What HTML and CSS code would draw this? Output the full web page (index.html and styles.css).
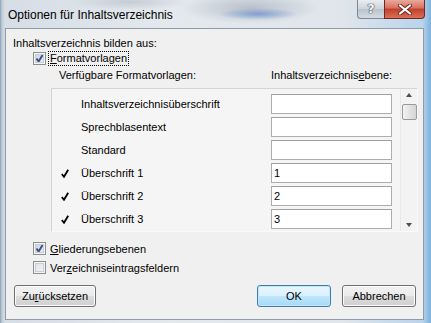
FILE: index.html
```html
<!DOCTYPE html>
<html lang="de">
<head>
  <meta charset="UTF-8">
  <title>Optionen für Inhaltsverzeichnis</title>
  <link rel="stylesheet" href="styles.css">
</head>
<body>
<div class="window">
  <div class="titlebar">
    <span class="title">Optionen für Inhaltsverzeichnis</span>
    <div class="caption-buttons">
      <span class="btn-help">?</span>
      <span class="btn-close">
        <svg width="14" height="11" viewBox="0 0 14 11">
          <path d="M2 1.5 L12 9.5 M12 1.5 L2 9.5" stroke="#6b2a22" stroke-width="4" stroke-linecap="round"/>
          <path d="M2 1.5 L12 9.5 M12 1.5 L2 9.5" stroke="#ffffff" stroke-width="2.2" stroke-linecap="round"/>
        </svg>
      </span>
    </div>
  </div>

  <div class="client">
    <div class="line">Inhaltsverzeichnis bilden aus:</div>

    <div class="check-row">
      <span class="checkbox checked"></span>
      <span class="focus"><u>F</u>ormatvorlagen</span>
    </div>

    <div class="col-heads">
      <span class="head-left">Verfügbare Formatvorlagen:</span>
      <span>Inhaltsverzeichnis<u>e</u>bene:</span>
    </div>

    <div class="listbox">
      <div class="rows">
        <div class="row">
          <span class="mark"></span>
          <span class="name">Inhaltsverzeichnisüberschrift</span>
          <span class="level"></span>
        </div>
        <div class="row">
          <span class="mark"></span>
          <span class="name">Sprechblasentext</span>
          <span class="level"></span>
        </div>
        <div class="row">
          <span class="mark"></span>
          <span class="name">Standard</span>
          <span class="level"></span>
        </div>
        <div class="row">
          <span class="mark">
            <svg width="8" height="9" viewBox="0 0 8 9"><path d="M0.8 5 L3 7.8 L7.2 0.8" stroke="#000" stroke-width="1.8" fill="none"/></svg>
          </span>
          <span class="name">Überschrift 1</span>
          <span class="level">1</span>
        </div>
        <div class="row">
          <span class="mark">
            <svg width="8" height="9" viewBox="0 0 8 9"><path d="M0.8 5 L3 7.8 L7.2 0.8" stroke="#000" stroke-width="1.8" fill="none"/></svg>
          </span>
          <span class="name">Überschrift 2</span>
          <span class="level">2</span>
        </div>
        <div class="row">
          <span class="mark">
            <svg width="8" height="9" viewBox="0 0 8 9"><path d="M0.8 5 L3 7.8 L7.2 0.8" stroke="#000" stroke-width="1.8" fill="none"/></svg>
          </span>
          <span class="name">Überschrift 3</span>
          <span class="level">3</span>
        </div>
      </div>
      <div class="scrollbar">
        <span class="arrow-up"></span>
        <span class="thumb"></span>
        <span class="track"></span>
        <span class="arrow-down"></span>
      </div>
    </div>

    <div class="check-row lower">
      <span class="checkbox checked"></span>
      <span class="plain"><u>G</u>liederungsebenen</span>
    </div>
    <div class="check-row lower second">
      <span class="checkbox"></span>
      <span class="plain">Ver<u>z</u>eichniseintragsfeldern</span>
    </div>

    <div class="buttons">
      <span class="button">Zu<u>r</u>ücksetzen</span>
      <span class="spacer"></span>
      <span class="button default">OK</span>
      <span class="button">Abbrechen</span>
    </div>
  </div>
</div>
</body>
</html>
```

FILE: styles.css
```css
* {
  margin: 0;
  padding: 0;
  box-sizing: border-box;
}

body {
  font-family: "Liberation Sans", Arial, sans-serif;
  font-size: 11px;
  color: #000;
  background: #c9d3dd;
}

/* Glass frame */
.window {
  width: 431px;
  height: 323px;
  display: flex;
  flex-direction: column;
  background:
    radial-gradient(ellipse 40px 6px at 258px 14px, rgba(70, 120, 200, 0.55), transparent),
    radial-gradient(ellipse 70px 16px at 250px 8px, rgba(150, 160, 175, 0.55), transparent),
    radial-gradient(ellipse 60px 8px at 130px 2px, rgba(170, 178, 190, 0.5), transparent),
    linear-gradient(to right, #8aa0b6 0, #c2ccd6 2px, #d6dde5 5px, #e4e9ee 40%, #dfe5eb 80%, #b8d4ec 98%, #7fb2dc 100%);
}

.titlebar {
  height: 28px;
  display: flex;
  justify-content: space-between;
  align-items: flex-start;
  padding: 0 6px 0 8px;
}

.title {
  font-size: 12px;
  line-height: 15px;
  margin-top: 8px;
}

.caption-buttons {
  display: flex;
}

.btn-help {
  width: 27px;
  height: 19px;
  border: 1px solid #7d8894;
  border-top: none;
  border-right: none;
  border-radius: 0 0 0 4px;
  background: linear-gradient(#e9edf1, #cbd3db 50%, #b9c3cd 51%, #d3dbe3);
  text-align: center;
  font-family: "DejaVu Sans", sans-serif;
  font-size: 13px;
  font-weight: bold;
  line-height: 17px;
  color: #f4f6f8;
  text-shadow: 0 0 1px #3a4048, 0 0 1px #3a4048, 0 0 1px #3a4048;
}

.btn-close {
  width: 41px;
  height: 19px;
  border: 1px solid #6e2a20;
  border-top: none;
  border-radius: 0 0 4px 0;
  background: linear-gradient(#e9a99c, #d6705f 45%, #c43e2a 50%, #d9705a);
  display: flex;
  align-items: center;
  justify-content: center;
}

/* Dialog body */
.client {
  flex: 1;
  margin: 0 7px 3px 5px;
  border: 1px solid #8f9ba6;
  background: #f0f0f0;
  padding: 7px 7px 0 7px;
  display: flex;
  flex-direction: column;
}

.line {
  line-height: 15px;
}

.check-row {
  display: flex;
  align-items: center;
  height: 15px;
  padding-left: 20px;
}

.check-row.lower {
  margin-top: 9px;
}

.check-row.second {
  margin-top: 4px;
}

.checkbox {
  width: 13px;
  height: 13px;
  border: 1px solid #8e8f8f;
  background: linear-gradient(135deg, #dcdfe3, #f6f6f6);
  box-shadow: inset 0 0 0 1px #f4f4f4, inset 0 0 0 2px #c9ced4;
  margin-right: 2px;
}

.checkbox.checked {
  background:
    url("data:image/svg+xml,%3Csvg xmlns='http://www.w3.org/2000/svg' width='11' height='11'%3E%3Cpath d='M2.5 5.5 L4.6 8.6 L8.6 2' stroke='%23344f8a' stroke-width='1.9' fill='none'/%3E%3C/svg%3E") center no-repeat,
    linear-gradient(135deg, #c9d0dc, #eef0f4);
}

.focus {
  border: 1px dotted #000;
  padding: 0 1px;
  line-height: 13px;
}

.plain {
  padding-left: 2px;
}

.col-heads {
  display: flex;
  margin-top: 2px;
  line-height: 15px;
  padding-left: 46px;
}

.head-left {
  width: 212px;
}

/* List of styles */
.listbox {
  margin: 5px 0 0 38px;
  width: 367px;
  height: 144px;
  display: flex;
  border: 1px solid #d4d4d4;
  border-right-color: #fafafa;
  border-bottom-color: #fafafa;
  background: #f5f5f5;
}

.rows {
  flex: 1;
  padding: 5px 0 0 9px;
  overflow: hidden;
}

.row {
  display: flex;
  align-items: center;
  height: 20px;
  margin-bottom: 3px;
}

.mark {
  width: 20px;
  display: flex;
  align-items: center;
}

.name {
  width: 190px;
}

.level {
  width: 121px;
  height: 20px;
  border: 1px solid #abadb3;
  border-top-color: #a0a0a0;
  background: #fff;
  padding-left: 2px;
  line-height: 18px;
}

.scrollbar {
  width: 17px;
  display: flex;
  flex-direction: column;
  align-items: center;
  border-left: 1px solid #e9e9e9;
  background: #f3f3f3;
}

.arrow-up,
.arrow-down {
  width: 0;
  height: 0;
  border-left: 3.5px solid transparent;
  border-right: 3.5px solid transparent;
}

.arrow-up {
  margin-top: 4px;
  border-bottom: 4px solid #4e4e4e;
}

.arrow-down {
  margin-bottom: 4px;
  border-top: 4px solid #4e4e4e;
}

.thumb {
  margin-top: 7px;
  width: 15px;
  height: 16px;
  border: 1px solid #9a9a9a;
  border-radius: 2px;
  background: linear-gradient(to right, #f2f2f2, #e3e3e3 50%, #d4d4d4);
}

.track {
  flex: 1;
}

/* Bottom buttons */
.buttons {
  display: flex;
  margin-top: 10px;
  padding-left: 1px;
}

.spacer {
  flex: 1;
}

.button {
  height: 22px;
  min-width: 74px;
  padding: 0 7px;
  border: 1px solid #707070;
  border-radius: 3px;
  background: linear-gradient(#f2f2f2, #ebebeb 50%, #dddddd 51%, #cfcfcf);
  box-shadow: inset 0 0 0 1px #fbfbfb;
  text-align: center;
  line-height: 20px;
}

.button + .button {
  margin-left: 11px;
}

.button.default {
  border-color: #3c7fb1;
  background: linear-gradient(#eaf6fd, #d9f0fc 50%, #bee6fd 51%, #a7d9f5);
  box-shadow: inset 0 0 0 1px #c4e5f6;
}
```
